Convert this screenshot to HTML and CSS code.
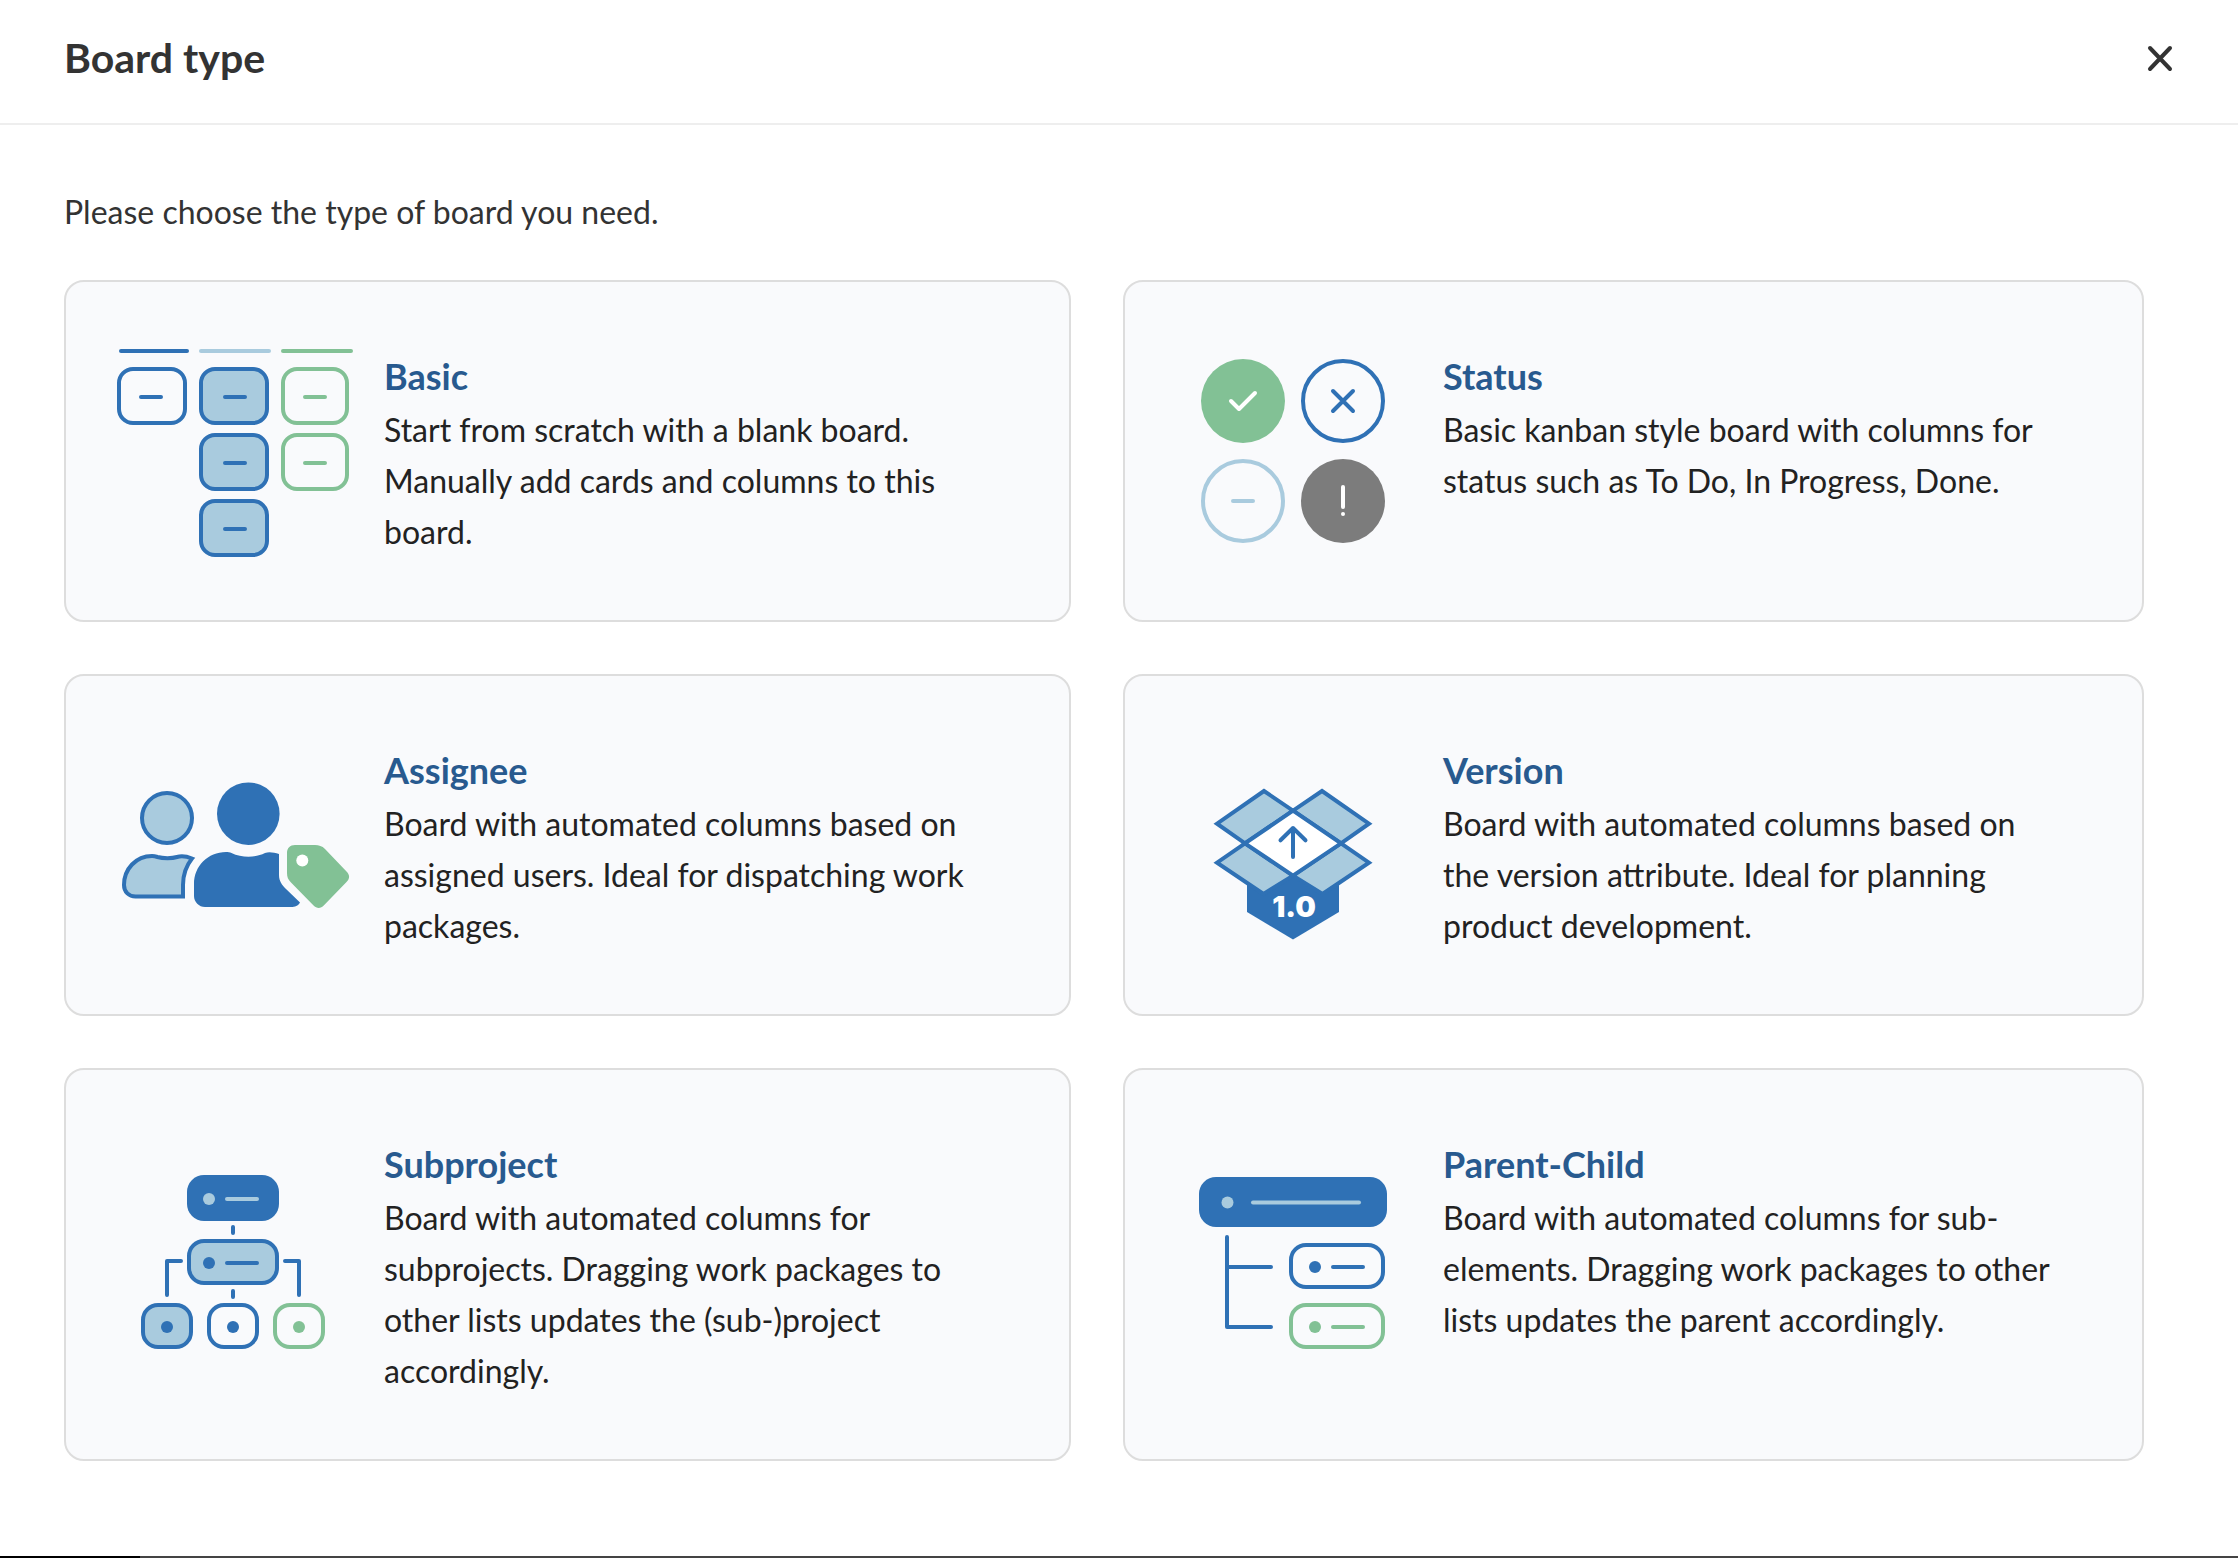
FILE: index.html
```
<!DOCTYPE html>
<html lang="en">
<head>
<meta charset="utf-8">
<meta name="viewport" content="width=device-width, initial-scale=1">
<title>Board type</title>
<link rel="stylesheet" href="styles.css">
</head>
<body>
<div class="modal" role="dialog" aria-labelledby="modal-title">
  <header class="modal-header">
    <h1 class="modal-title" id="modal-title">Board type</h1>
    <button class="close" type="button" aria-label="Close">
      <svg width="28" height="28" viewBox="0 0 28 28" aria-hidden="true"><path d="M4 4L24 25M24 4L4 25"/></svg>
    </button>
  </header>
  <main class="modal-body">
    <p class="prompt">Please choose the type of board you need.</p>
    <div class="tiles">

      <button class="tile" type="button">
        <svg class="tile-icon" width="240" height="240" viewBox="0 0 240 240" aria-hidden="true">
          <path class="blue line" d="M7 20H73"/>
          <path class="light line" d="M87 20H155"/>
          <path class="green line" d="M169 20H237"/>
          <rect class="blue line" x="5" y="38" width="66" height="54" rx="14"/>
          <rect class="blue line tinted" x="87" y="38" width="66" height="54" rx="14"/>
          <rect class="blue line tinted" x="87" y="104" width="66" height="54" rx="14"/>
          <rect class="blue line tinted" x="87" y="170" width="66" height="54" rx="14"/>
          <rect class="green line" x="169" y="38" width="64" height="54" rx="14"/>
          <rect class="green line" x="169" y="104" width="64" height="54" rx="14"/>
          <path class="blue line" d="M27 66H47M111 66H131M111 132H131M111 198H131"/>
          <path class="green line" d="M191 66H211M191 132H211"/>
        </svg>
        <span class="tile-text">
          <span class="tile-title">Basic</span>
          <span class="tile-desc">Start from scratch with a blank board. Manually add cards and columns to this board.</span>
        </span>
      </button>

      <button class="tile" type="button">
        <svg class="tile-icon" width="240" height="240" viewBox="0 0 240 240" aria-hidden="true">
          <circle class="green-fill" cx="70" cy="70" r="42"/>
          <path class="white line" d="M58 70L66 78L82 62"/>
          <circle class="blue line" cx="170" cy="70" r="40"/>
          <path class="blue line" d="M160 60L180 80M180 60L160 80"/>
          <circle class="light line" cx="70" cy="170" r="40"/>
          <path class="light line" d="M60 170H80"/>
          <circle class="grey-fill" cx="170" cy="170" r="42"/>
          <path class="white line" d="M170 156V176"/>
          <circle class="white-fill" cx="170" cy="183" r="2"/>
        </svg>
        <span class="tile-text">
          <span class="tile-title">Status</span>
          <span class="tile-desc">Basic kanban style board with columns for status such as To Do, In Progress, Done.</span>
        </span>
      </button>

      <button class="tile" type="button">
        <svg class="tile-icon" width="240" height="240" viewBox="0 0 240 240" aria-hidden="true">
          <circle class="blue line tinted" cx="53" cy="93" r="25"/>
          <path class="blue line tinted sharp" d="M10 160C10 144 22 131 38 131C40 131 42 131.500 43.500 132C49 133.600 58 133.600 63 132C68 130.500 73 131.500 78 133.500C72 141 69 149 69 160V171.500H21.500C15 171.500 10 167 10 160Z"/>
          <circle class="blue-fill" cx="134.300" cy="88.700" r="31.300"/>
          <path class="blue-fill" d="M80 159C80 141 94 127 112 127C114 127 116 127.300 117.500 128C128 133 141 133 151 128C155 126.500 160 127.500 165 129V150C165 156 168 160 172 164L186 177.500C184 181 181 182 177 182H91C85 182 80 177 80 171Z"/>
          <path class="green-fill" d="M173 128C173 123 176 120 181 120H201C205 120 208 121 211 124L232.500 146.500C236 150 236 153.500 232.500 157L210 180.300C206.500 184 203 184 199.300 180.300L177 157.500C174 154.500 173 152 173 148Z"/>
          <circle class="white-fill" cx="188.300" cy="135.500" r="6"/>
        </svg>
        <span class="tile-text">
          <span class="tile-title">Assignee</span>
          <span class="tile-desc">Board with automated columns based on assigned users. Ideal for dispatching work packages.</span>
        </span>
      </button>

      <button class="tile" type="button">
        <svg class="tile-icon" width="240" height="240" viewBox="0 0 240 240" aria-hidden="true">
          <path class="blue-fill" d="M74 156L120 148L166 156V187L120 214.500L74 187Z"/>
          <path class="blue line tinted sharp" d="M91 66L44 98.700L72 118.300L120 85.700Z"/>
          <path class="blue line tinted sharp" d="M149 66L196 98.700L168 118.300L120 85.700Z"/>
          <path class="blue line tinted sharp" d="M72 118.300L44 137.700L90.500 169L120 150.700Z"/>
          <path class="blue line tinted sharp" d="M168 118.300L196 137.700L149.500 169L120 150.700Z"/>
          <path class="blue line sharp white-fill" d="M120 85.700L168 118.300L120 150.700L72 118.300Z"/>
          <path class="blue line" d="M120 132V103M107.500 115.300L120 103L132.500 115.300"/>
          <text class="version-number" x="121" y="192" text-anchor="middle">1.0</text>
        </svg>
        <span class="tile-text">
          <span class="tile-title">Version</span>
          <span class="tile-desc">Board with automated columns based on the version attribute. Ideal for planning product development.</span>
        </span>
      </button>

      <button class="tile" type="button">
        <svg class="tile-icon" width="240" height="241" viewBox="0 0 240 241" aria-hidden="true">
          <rect class="blue-fill" x="73" y="31" width="92" height="46" rx="17"/>
          <circle class="light-fill" cx="95" cy="55" r="6"/>
          <path class="light line" d="M113 55H143"/>
          <rect class="blue line tinted" x="75" y="97" width="88" height="42" rx="15"/>
          <path class="blue line" d="M119 83V89M119 147V153M113 119H143M67 117H53V151M171 117H185V151"/>
          <rect class="blue line tinted" x="29" y="161" width="48" height="42" rx="15"/>
          <rect class="blue line" x="95" y="161" width="48" height="42" rx="15"/>
          <rect class="green line" x="161" y="161" width="48" height="42" rx="15"/>
          <circle class="blue-fill" cx="95" cy="119" r="6"/>
          <circle class="blue-fill" cx="53" cy="183" r="6"/>
          <circle class="blue-fill" cx="119" cy="183" r="6"/>
          <circle class="green-fill" cx="185" cy="183" r="6"/>
        </svg>
        <span class="tile-text">
          <span class="tile-title">Subproject</span>
          <span class="tile-desc">Board with automated columns for subprojects. Dragging work packages to other lists updates the (sub-)project accordingly.</span>
        </span>
      </button>

      <button class="tile" type="button">
        <svg class="tile-icon" width="240" height="241" viewBox="0 0 240 241" aria-hidden="true">
          <rect class="blue-fill" x="26" y="33" width="188" height="50" rx="17"/>
          <circle class="light-fill" cx="54.500" cy="58.500" r="6"/>
          <path class="light line" d="M80 58.500H186"/>
          <path class="blue line" d="M54 93V183H98M54 123H98M160 123H190"/>
          <rect class="blue line" x="118" y="101" width="92" height="42" rx="15"/>
          <circle class="blue-fill" cx="142" cy="123" r="6"/>
          <rect class="green line" x="118" y="161" width="92" height="42" rx="15"/>
          <circle class="green-fill" cx="142" cy="183" r="6"/>
          <path class="green line" d="M160 183H190"/>
        </svg>
        <span class="tile-text">
          <span class="tile-title">Parent-Child</span>
          <span class="tile-desc">Board with automated columns for sub-elements. Dragging work packages to other lists updates the parent accordingly.</span>
        </span>
      </button>

    </div>
  </main>
  <div class="backdrop-edge"></div>
</div>
</body>
</html>
```
FILE: styles.css
```
*, *::before, *::after {
  box-sizing: border-box;
}

body {
  margin: 0;
  background: #fff;
  color: #333;
  font-family: Lato, "Liberation Sans", sans-serif;
  font-size: 32px;
  line-height: 51px;
}

.modal {
  display: flex;
  flex-direction: column;
  min-height: 100vh;
}

.modal-header {
  display: flex;
  align-items: center;
  justify-content: space-between;
  padding: 30px 64px 37px;
  border-bottom: 2px solid #eee;
}

.modal-title {
  margin: 0;
  font-size: 41px;
  font-weight: 700;
  line-height: 56px;
}

.close {
  display: flex;
  padding: 0;
  border: 0;
  background: none;
  cursor: pointer;
}

.close path {
  fill: none;
  stroke: #333;
  stroke-width: 4px;
  stroke-linecap: round;
}

.modal-body {
  flex: 1;
  padding: 61px 94px 94px 64px;
}

.prompt {
  margin: 0 0 43px;
}

.tiles {
  display: grid;
  grid-template-columns: 1007fr 1021fr;
  gap: 52px;
}

.tile {
  display: flex;
  align-items: flex-start;
  gap: 30px;
  min-width: 0;
  padding: 0 80px 0 48px;
  border: 2px solid #ddd;
  border-radius: 20px;
  background: #f9fafc;
  color: #222;
  font: inherit;
  text-align: left;
  cursor: pointer;
}

.tile-icon {
  flex: none;
  align-self: center;
}

.tile-text {
  display: block;
  min-width: 0;
  padding: 66px 0 63px;
}

.tile-title {
  display: block;
  color: #285a8f;
  font-size: 36px;
  font-weight: 700;
  line-height: 56px;
}

.tile-desc {
  display: block;
}

.line {
  fill: none;
  stroke-width: 4px;
  stroke-linecap: round;
  stroke-linejoin: round;
}

.sharp {
  stroke-linejoin: miter;
}

.blue {
  stroke: #2f71b5;
}

.light {
  stroke: #a9cbde;
}

.green {
  stroke: #82c195;
}

.white {
  stroke: #fff;
}

.tinted,
.light-fill {
  fill: #a9cbde;
}

.blue-fill {
  fill: #2f71b5;
}

.green-fill {
  fill: #82c195;
}

.grey-fill {
  fill: #7c7c7c;
}

.white-fill {
  fill: #fff;
}

.version-number {
  fill: #fff;
  font-family: Inter, "Open Sans", sans-serif;
  font-size: 29px;
  font-weight: 900;
}

.backdrop-edge {
  height: 2px;
  background: linear-gradient(to right, #000 140px, #444 140px);
}
```
